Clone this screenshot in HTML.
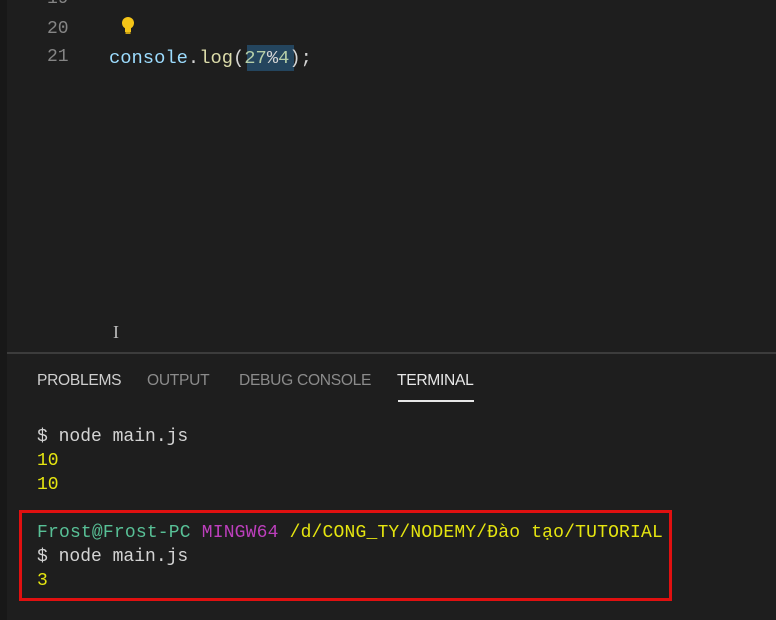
<!DOCTYPE html>
<html><head><meta charset="utf-8"><style>
html,body{margin:0;padding:0;width:776px;height:620px;overflow:hidden;background:#1e1e1e;}
body{position:relative;font-family:"Liberation Mono",monospace;}
.a{position:absolute;white-space:pre;}
.ln{color:#858585;font-size:18px;}
.code{font-size:18.8px;}
.tab{position:absolute;top:372px;font-family:"Liberation Sans",sans-serif;font-size:15.6px;color:#8b8b8b;letter-spacing:-0.3px;}
.t{font-size:18px;color:#d4d4d4;}
</style></head><body>
<div class="a" style="left:0;top:0;width:7px;height:620px;background:#181818"></div>
<div class="a ln" style="left:47px;top:-11px">19</div>
<div class="a ln" style="left:47px;top:19px">20</div>
<div class="a ln" style="left:47px;top:47px">21</div>
<svg class="a" style="left:119px;top:16px" width="18" height="20" viewBox="0 0 18 20"><circle cx="9" cy="7" r="6" fill="#f5c518"/><rect x="6" y="11" width="6" height="5" fill="#f5c518"/><rect x="6.5" y="16" width="5" height="2" fill="#c9a014"/></svg>
<div class="a" style="left:247px;top:45px;width:47px;height:26px;background:#264f6e;opacity:.8"></div>
<div class="a code" style="left:109px;top:47px"><span style="color:#9cdcfe">console</span><span style="color:#d4d4d4">.</span><span style="color:#dcdcaa">log</span><span style="color:#d4d4d4">(</span><span style="color:#b5cea8">27</span><span style="color:#d4d4d4">%</span><span style="color:#b5cea8">4</span><span style="color:#d4d4d4">);</span></div>
<div class="a" style="left:113px;top:322px;color:#bbb;font-family:'Liberation Serif',serif;font-size:18px">I</div>
<div class="a" style="left:7px;top:352px;width:769px;height:2px;background:#3c3c3c"></div>
<div class="tab" style="left:37px;color:#cfcfcf">PROBLEMS</div>
<div class="tab" style="left:147px">OUTPUT</div>
<div class="tab" style="left:239px">DEBUG CONSOLE</div>
<div class="tab" style="left:397px;color:#e7e7e7">TERMINAL</div>
<div class="a" style="left:398px;top:400px;width:76px;height:2px;background:#e7e7e7"></div>
<div class="a t" style="left:37px;top:427px">$ node main.js</div>
<div class="a t" style="left:37px;top:451px;color:#e5e510">10</div>
<div class="a t" style="left:37px;top:475px;color:#e5e510">10</div>
<div class="a" style="left:19px;top:510px;width:647px;height:85px;border:3px solid #e01010"></div>
<div class="a t" style="left:37px;top:523px;letter-spacing:0.18px"><span style="color:#23d18b;filter:saturate(.6)">Frost@Frost-PC</span> <span style="color:#bc3fbc">MINGW64</span> <span style="color:#e5e510">/d/CONG_TY/NODEMY/Đào tạo/TUTORIAL</span></div>
<div class="a t" style="left:37px;top:547px">$ node main.js</div>
<div class="a t" style="left:37px;top:571px;color:#e5e510">3</div>
</body></html>
